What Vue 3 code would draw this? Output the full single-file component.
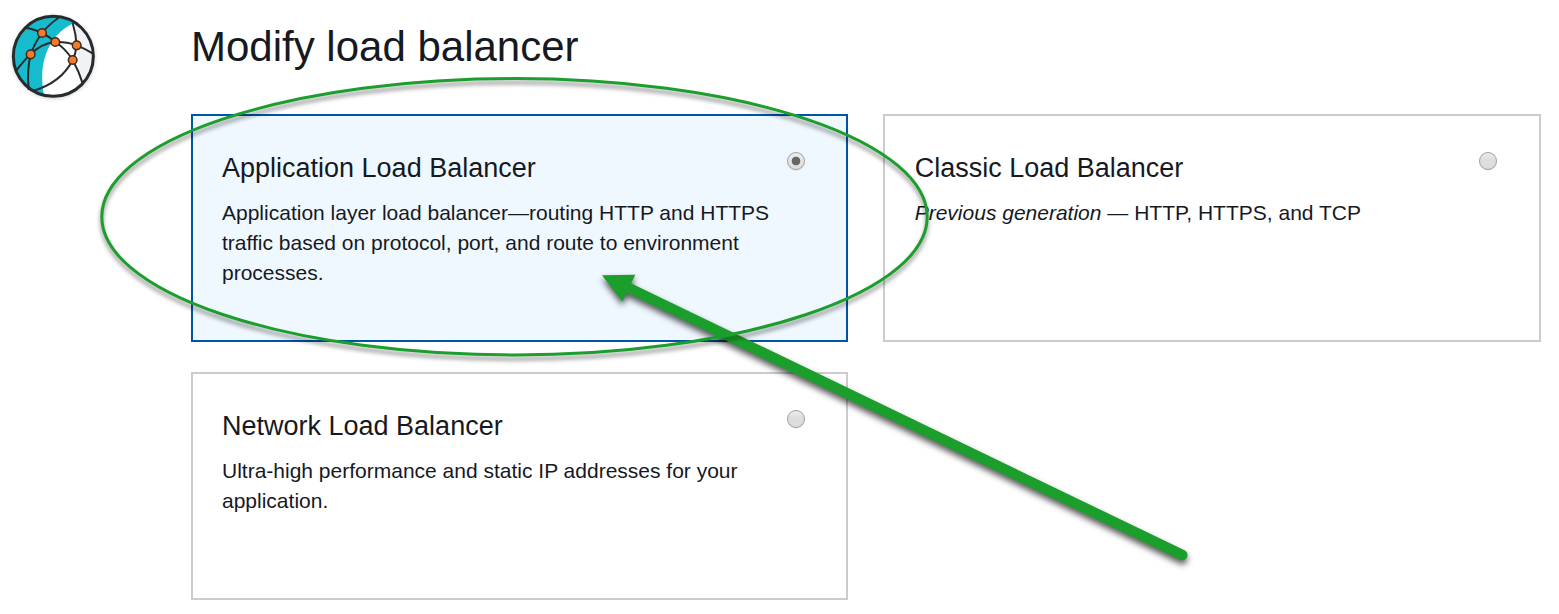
<script setup>
import { ref } from 'vue'

const selected = ref('application')
const options = [
  { id: 'application', title: 'Application Load Balancer', text: 'Application layer load balancer—routing HTTP and HTTPS traffic based on protocol, port, and route to environment processes.' },
  { id: 'classic', title: 'Classic Load Balancer', lead: 'Previous generation', text: ' — HTTP, HTTPS, and TCP' },
  { id: 'network', title: 'Network Load Balancer', text: 'Ultra-high performance and static IP addresses for your application.' },
]
</script>

<template>
  <div class="page">
    <aside class="brand">
      <svg class="logo" viewBox="0 0 330 330" aria-hidden="true">
        <clipPath id="globe"><circle cx="160" cy="169" r="120" /></clipPath>
        <circle class="disc" cx="160" cy="169" r="120" />
        <g clip-path="url(#globe)">
          <path class="shade" d="M219 50C240 125 224 185 252 270H300V50Z" />
          <path class="sea" d="M226 68C160 92 105 175 135 300H30V40H226Z" />
        </g>
        <g class="net">
          <path d="M78 84Q106 88 126 99Q148 110 166 126Q197 146 218 180Q237 214 248 250" />
          <path d="M175 54Q148 72 126 99Q104 129 92 163Q70 183 47 215" />
          <path d="M86 270Q80 212 92 163Q124 130 166 126Q200 125 230 136Q258 147 279 161" />
          <path d="M218 69Q228 102 230 136Q227 162 218 180Q184 248 98 273" />
        </g>
        <circle class="rim" cx="160" cy="169" r="120" />
        <g class="nodes">
          <circle cx="126" cy="99" r="13" />
          <circle cx="166" cy="126" r="13" />
          <circle cx="230" cy="136" r="13" />
          <circle cx="92" cy="163" r="13" />
          <circle cx="218" cy="180" r="13" />
        </g>
      </svg>
    </aside>

    <main class="content">
      <h1>Modify load balancer</h1>
      <div class="cards">
        <label v-for="o in options" :key="o.id" class="card" :class="{ active: selected === o.id }">
          <span class="copy">
            <span class="name">{{ o.title }}</span>
            <span class="desc"><em v-if="o.lead">{{ o.lead }}</em>{{ o.text }}</span>
          </span>
          <input v-model="selected" class="radio" type="radio" name="balancer" :value="o.id" />
        </label>
      </div>
    </main>

    <svg class="marks" viewBox="0 0 1559 614" aria-hidden="true">
      <g class="arrow">
        <path class="shaft" d="M624 285.6L1182.3 555" />
        <path class="head" d="M602 275.2L635.3 274.8L622.5 301.5Z" />
      </g>
      <g class="ring"><ellipse cx="514.5" cy="216.8" rx="412.7" ry="138.2" /></g>
    </svg>
  </div>
</template>

<style>
body {
  background: #fff;
}
</style>

<style scoped>
.page {
  position: relative;
  display: flex;
  width: 1559px;
  height: 614px;
  overflow: hidden;
  font-family: "Liberation Sans", Arial, sans-serif;
  color: #16191f;
}
.brand {
  width: 191px;
  flex: none;
}
.logo {
  display: block;
  width: 110px;
  height: 110px;
}
.disc { fill: #fff; filter: drop-shadow(0 3px 8px rgba(0, 0, 0, 0.35)); }
.shade { fill: #f1f2f5; }
.sea { fill: #16bccd; }
.rim { fill: none; stroke: #262b2e; stroke-width: 9; }
.net { fill: none; stroke: #262b2e; stroke-width: 6; }
.nodes { fill: #f47a25; stroke: #3a2c25; stroke-width: 4.5; }
.content {
  width: 1350px;
  padding-top: 20px;
}
h1 {
  margin: 0 0 40px;
  font-size: 42px;
  line-height: 54px;
  font-weight: 400;
}
.cards {
  display: grid;
  grid-template-columns: 657px 658px;
  grid-auto-rows: 228px;
  gap: 30px 35px;
}
.card {
  box-sizing: border-box;
  display: flex;
  justify-content: space-between;
  padding: 34px 41px 0 29px;
  border: 2px solid #ccc;
  background: #fff;
}
.card:nth-child(2) {
  padding-right: 42px;
  padding-left: 29.7px;
}
.card.active {
  border-color: #0054a6;
  background: #f0f8ff;
}
.copy {
  display: block;
  width: 555px;
}
.name {
  display: block;
  margin-bottom: 12px;
  font-size: 27px;
  line-height: 36px;
}
.desc {
  display: block;
  font-size: 21px;
  line-height: 30px;
}
.radio {
  appearance: none;
  box-sizing: border-box;
  flex: none;
  width: 18px;
  height: 18px;
  margin: 2px 0 0;
  border: 1px solid #a0a0a0;
  border-radius: 50%;
  background: linear-gradient(#ececec 0, #dedede 45%, #dcdcdc 100%);
  box-shadow: 0 1px 1px rgba(0, 0, 0, 0.08);
}
.radio:checked {
  background: radial-gradient(circle, #666 0 4px, transparent 4.7px), linear-gradient(#ececec, #dcdcdc);
}
.marks {
  position: absolute;
  inset: 0;
  width: 1559px;
  height: 614px;
  pointer-events: none;
}
.ring { filter: drop-shadow(0 4px 2px rgba(0, 0, 0, 0.45)); }
.ring ellipse { fill: none; stroke: #1c9e2c; stroke-width: 3; }
.arrow { filter: drop-shadow(0 4px 3px rgba(0, 0, 0, 0.65)); }
.shaft { stroke: #1c9e2c; stroke-width: 10.4; stroke-linecap: round; }
.head { fill: #1c9e2c; }
</style>
